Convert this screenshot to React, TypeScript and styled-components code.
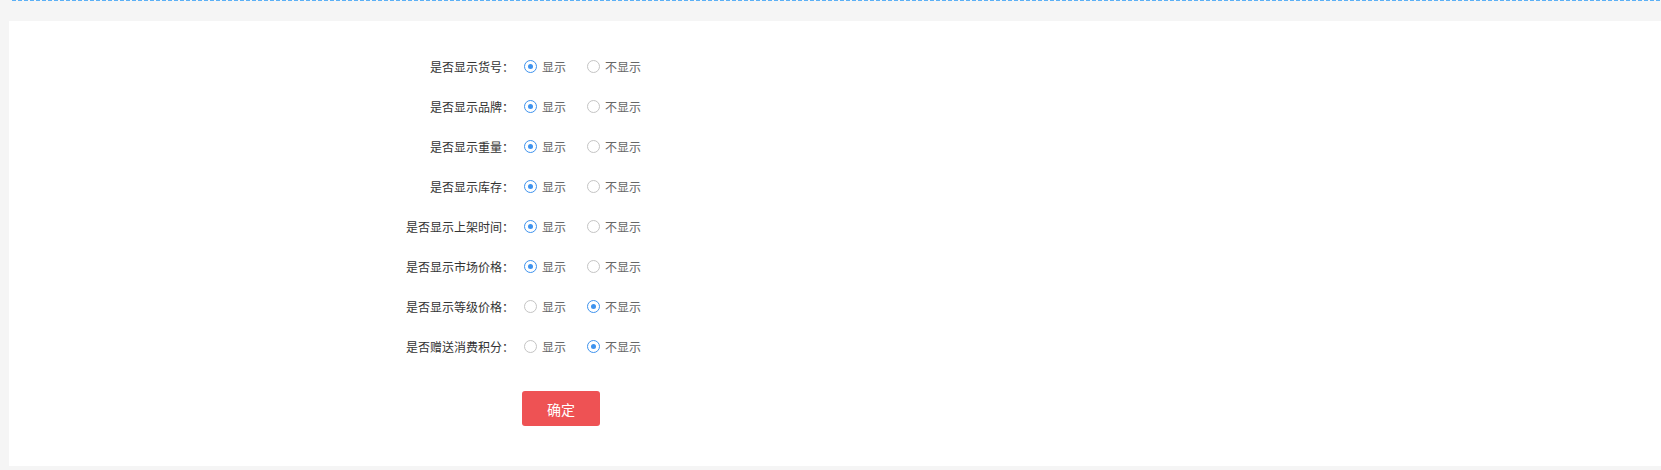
import React, { useState } from "react";
import styled, { createGlobalStyle } from "styled-components";

const GlobalStyle = createGlobalStyle`
  html, body {
    margin: 0;
    padding: 0;
    background: #f5f5f5;
    font-family: "Noto Sans CJK SC", "Noto Sans", sans-serif;
  }
`;

const Page = styled.div`
  width: 100%;
  height: 470px;
  display: flex;
  flex-direction: column;
  box-sizing: border-box;
  padding-left: 9px;
`;

const DashLine = styled.div`
  height: 1px;
  margin-left: 3px;
  background: repeating-linear-gradient(
    to right,
    #5cb0f5 0,
    #5cb0f5 4px,
    transparent 4px,
    transparent 6px
  );
`;

const Panel = styled.div`
  margin-top: 20px;
  height: 445px;
  box-sizing: border-box;
  background: #fff;
  padding: 25px 0 40px 385px;
  display: flex;
  flex-direction: column;
`;

const Row = styled.div`
  height: 40px;
  display: flex;
  align-items: center;
`;

const Label = styled.label`
  width: 120px;
  text-align: right;
  font-size: 12px;
  color: #333;
  margin-right: 10px;
`;

const Option = styled.label`
  display: flex;
  align-items: center;
  font-size: 12px;
  color: #666;
  margin-right: 21px;
  cursor: pointer;
`;

const Circle = styled.span<{ $on: boolean }>`
  width: 13px;
  height: 13px;
  box-sizing: border-box;
  border-radius: 50%;
  border: 1px solid ${(p) => (p.$on ? "#3d92ee" : "#c4c4c4")};
  display: flex;
  align-items: center;
  justify-content: center;
  margin-right: 5px;

  &::after {
    content: "";
    width: 5px;
    height: 5px;
    border-radius: 50%;
    background: #3d92ee;
    display: ${(p) => (p.$on ? "block" : "none")};
  }
`;

const Submit = styled.button`
  margin-top: 25px;
  margin-left: 128px;
  width: 78px;
  height: 35px;
  border: none;
  border-radius: 3px;
  background: #ee5254;
  color: #fff;
  font-size: 14px;
  font-family: inherit;
  cursor: pointer;
`;

const items = [
  { name: "是否显示货号", show: true },
  { name: "是否显示品牌", show: true },
  { name: "是否显示重量", show: true },
  { name: "是否显示库存", show: true },
  { name: "是否显示上架时间", show: true },
  { name: "是否显示市场价格", show: true },
  { name: "是否显示等级价格", show: false },
  { name: "是否赠送消费积分", show: false },
];

function App() {
  const [values, setValues] = useState(items.map((i) => i.show));

  const pick = (idx: number, v: boolean) =>
    setValues((prev) => prev.map((x, i) => (i === idx ? v : x)));

  return (
    <>
      <GlobalStyle />
      <Page>
        <DashLine />
        <Panel>
          {items.map((item, idx) => (
            <Row key={item.name}>
              <Label>{item.name}：</Label>
              <Option onClick={() => pick(idx, true)}>
                <Circle $on={values[idx]} />
                显示
              </Option>
              <Option onClick={() => pick(idx, false)}>
                <Circle $on={!values[idx]} />
                不显示
              </Option>
            </Row>
          ))}
          <Submit type="button">确定</Submit>
        </Panel>
      </Page>
    </>
  );
}

export default App;
